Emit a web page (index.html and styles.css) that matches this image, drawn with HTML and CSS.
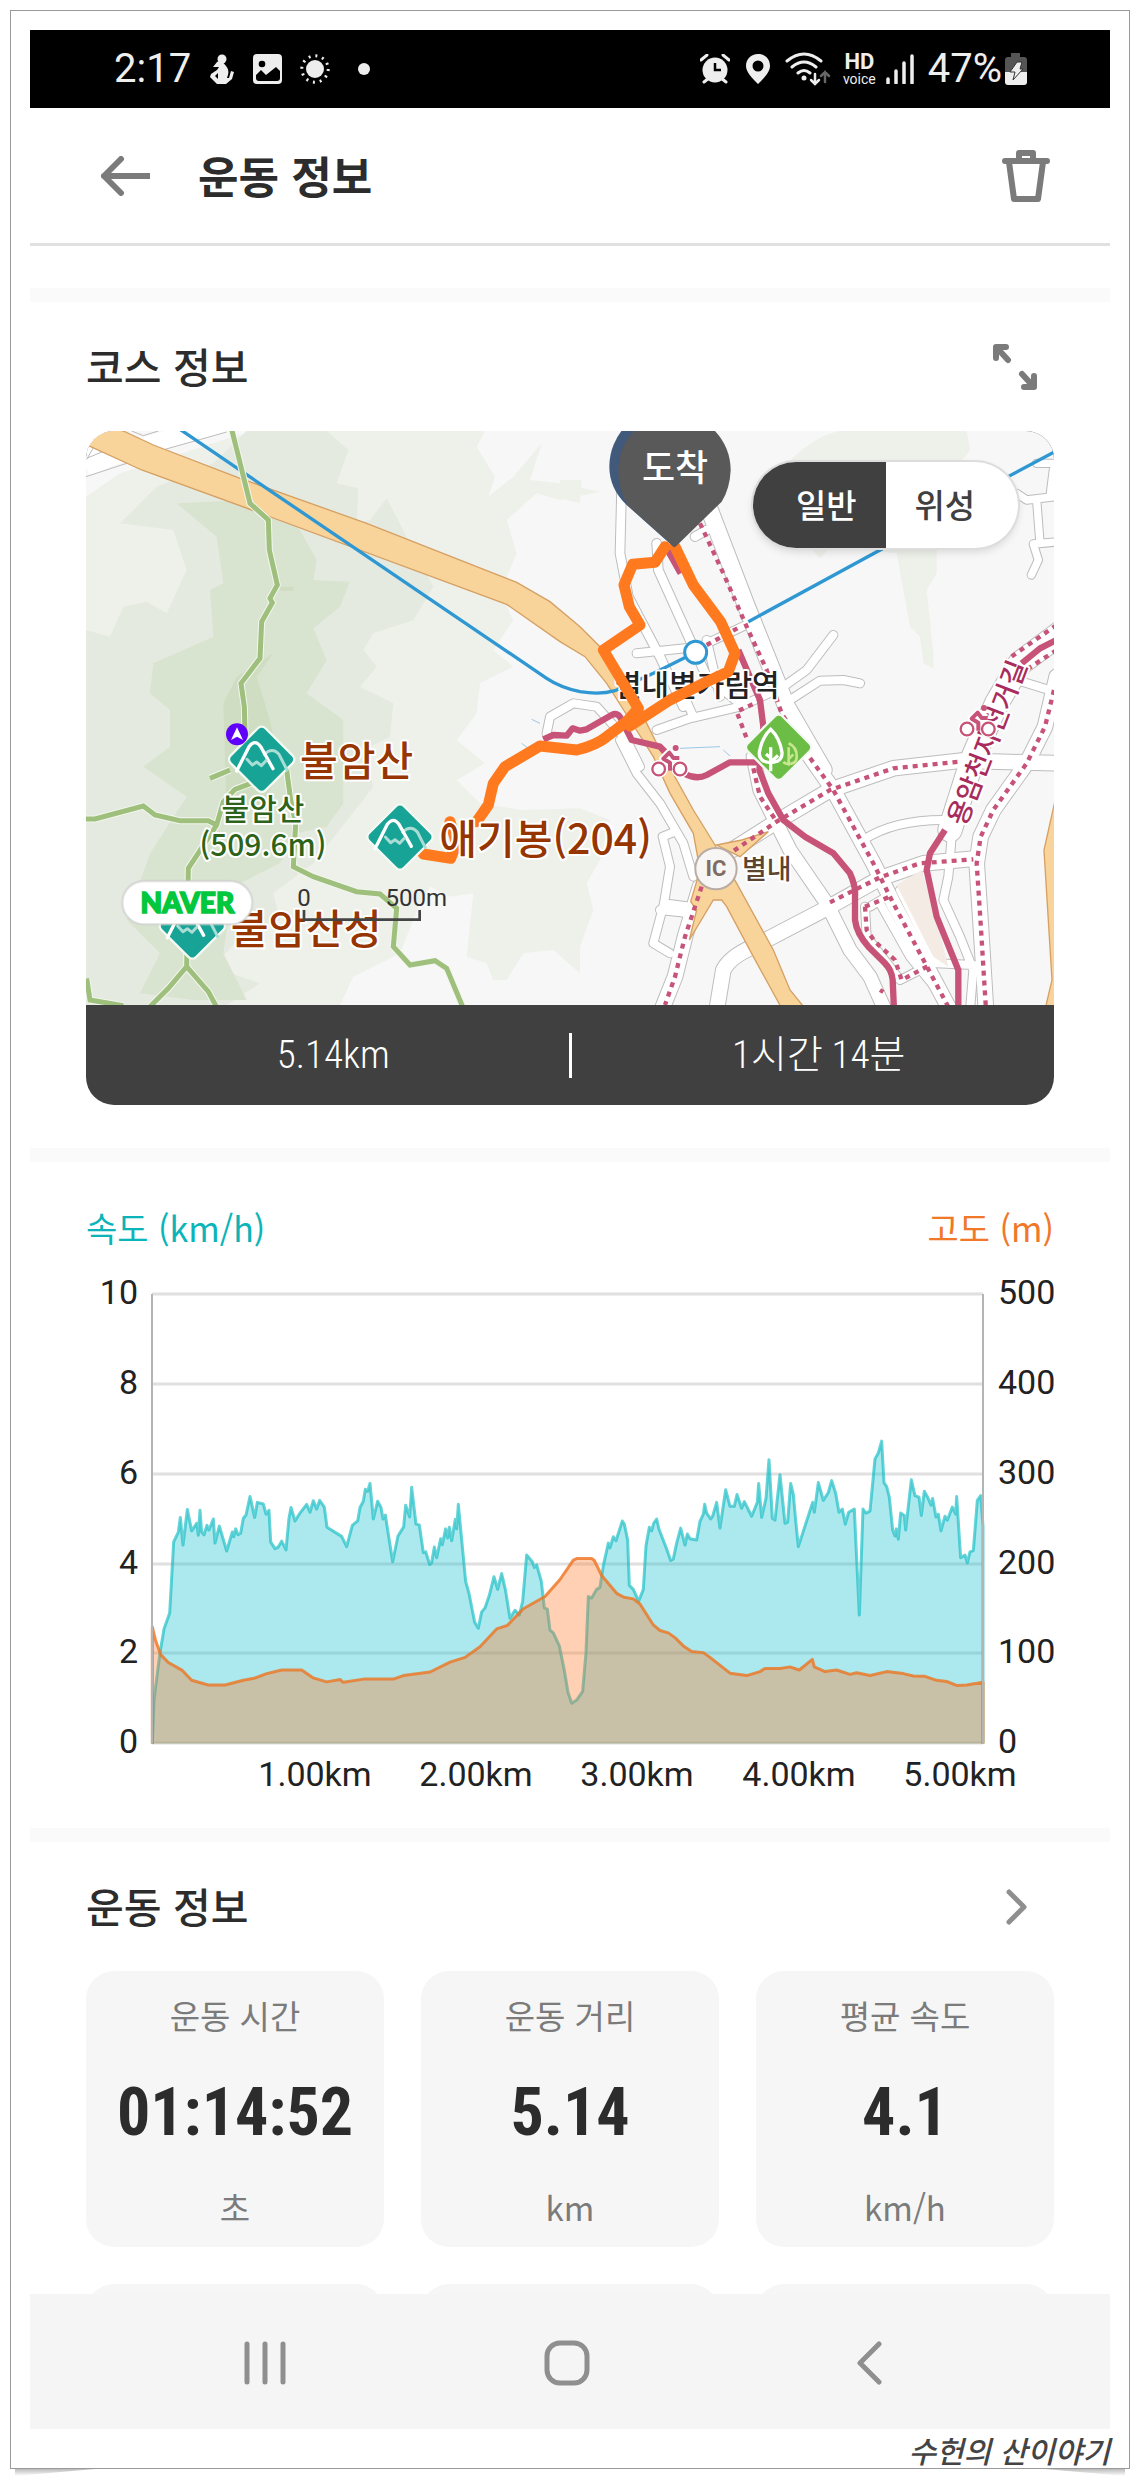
FILE: index.html
```html
<!DOCTYPE html>
<html lang="ko">
<head>
<meta charset="utf-8">
<meta name="viewport" content="width=device-width, initial-scale=1">
<title>운동 정보</title>
<link rel="stylesheet" href="styles.css">
</head>
<body>
<div class="frame">
<div class="screen">
  <div class="status">
    <span class="status-time">2:17</span>
    <svg class="ic-person" viewBox="0 0 26 30" width="26" height="30"><circle cx="14" cy="5" r="4.500"/><path d="M9 8l4-2 5 6c4 5 2 9 1 12h2l2-7 3 1-2 7-6 5H9L2 23l1-3 6-4 2-3-6 0z"/><path d="M7 22l3-3v6z" fill="#000"/></svg>
    <svg class="ic-photo" viewBox="0 0 29 30" width="29" height="30"><rect width="29" height="30" rx="4"/><circle cx="9" cy="10" r="3.300" fill="#000"/><path d="M3 21l5-5 5 5 10-8 4 4v7q0 3-3 3H6q-3 0-3-3z" fill="#000"/></svg>
    <svg class="ic-sun" viewBox="0 0 30 30" width="30" height="30"><circle cx="15" cy="15" r="9"/><circle cx="15" cy="15" r="13.200" fill="none" stroke="#eee" stroke-width="3" stroke-dasharray="2 4.910"/></svg>
    <svg class="ic-dot" viewBox="0 0 12 12" width="12" height="12"><circle cx="6" cy="6" r="6"/></svg>
    <span class="grow"></span>
    <svg class="ic-alarm" viewBox="0 0 30 30" width="30" height="30"><circle cx="15" cy="16" r="12.500"/><path d="M1 6l6-5M29 6l-6-5M4 28l5-4M26 28l-5-4" stroke="#eee" stroke-width="3" stroke-linecap="round"/><path d="M15 9v7h6" fill="none" stroke="#000" stroke-width="2.500"/></svg>
    <svg class="ic-pin" viewBox="0 0 24 30" width="24" height="30"><path fill-rule="evenodd" d="M12 0c7 0 12 5 12 12 0 6-6 12-12 18C6 24 0 18 0 12 0 5 5 0 12 0zm0 6.500a5.500 5.500 0 1 0 0 11 5.500 5.500 0 0 0 0-11z"/></svg>
    <svg class="ic-wifi" viewBox="0 0 46 34" width="46" height="34"><g fill="none" stroke="#eee" stroke-width="3" stroke-linecap="round"><path d="M2 9q17-14 34 0M7 15q12-10 24 0M13 21q6-5 12 0"/><path d="M30 22v9m-4-3l4 4 4-4" stroke-width="2.500"/><path d="M40 30v-10m-4 4l4-4 4 4" stroke="#666" stroke-width="2.500"/></g><circle cx="19" cy="26" r="2.500"/></svg>
    <span class="hd"><b>HD</b><small>voice</small></span>
    <svg class="ic-signal" viewBox="0 0 28 30" width="28" height="30"><path d="M2 25v4M10 17v12M18 9v20M26 2v27" stroke="#eee" stroke-width="3.500" stroke-linecap="round"/></svg>
    <span class="status-pct">47%</span>
    <svg class="ic-batt" viewBox="0 0 22 32" width="22" height="32"><path d="M6 0h9v4h4q3 0 3 3v13H0V7q0-3 3-3h3z" fill="#555"/><path d="M0 19h22v10q0 3-3 3H3q-3 0-3-3z"/><path d="M12 9h5l-2 7h3L8 27l2-8H5z" stroke="#333"/></svg>
  </div>

  <header class="appbar">
    <button class="icon-btn" aria-label="뒤로"><svg viewBox="0 0 50 40" width="50" height="40"><path d="M21 3L4 20l17 17M4 20h45" class="line6"/></svg></button>
    <h1>운동 정보</h1>
    <button class="icon-btn" aria-label="삭제"><svg viewBox="0 0 48 54" width="48" height="54"><path d="M3 12h42M17 11V4h14v7M7 13l5 37h24l5-37" class="line6"/></svg></button>
  </header>

  <section class="section course">
    <div class="section-head">
      <h2>코스 정보</h2>
      <button class="icon-btn expand" aria-label="지도 확대"><svg viewBox="0 0 46 46" width="46" height="46"><path d="M16 16L5 4M4 14V3h10M30 30l11 12M42 32v11h-10" class="line6"/></svg></button>
    </div>
    <div class="map-card">
      <svg class="map" viewBox="18 33 2904 1722" role="img" aria-label="코스 지도">
        <defs>
          <g id="roads-top">
            <path d="M445 260L560 560 680 860 790 1050" stroke-width="56"/>
            <path d="M185 200L180 400 205 530 300 710 370 860M290 370L295 450 440 770 540 850M405 350L440 330" stroke-width="32"/>
            <path d="M230 700L420 680 590 600M440 660L480 830M820 645L740 750 670 800 540 860 390 895 290 930M900 790L850 780 780 782 690 840M-40 940L-30 890 40 850 110 860 200 960 240 1040M360 800L400 890" stroke-width="30"/>
            <path d="M1500 130H1430M1370 220L1400 240 1500 228M1430 240L1440 370M1480 150L1470 230M1500 365L1420 372 1435 420 1414 465" stroke-width="28"/>
            <path d="M1500 640L1380 730 1310 850 1240 1010 1170 1230" stroke-width="76"/>
            <path d="M1370 780L1500 820" stroke-width="30"/>
          </g>
          <g id="roads-low">
            <path d="M500 490L650 395 810 300 1000 235 1200 212 1500 220M1490-40L1455 110 1400 220 1300 360 1262 440 1250 520 1262 700 1278 960M750 200L820 300 940 520 1000 640 1170 960M470 960L490 840Q510 800 580 770L800 655 960 565 1090 520 1250 505M420 590L375 740 345 860 305 960" stroke-width="50"/>
            <path d="M580 200L600 300 690 480 800 640 870 780 930 860 975 960" stroke-width="46"/>
            <path d="M180 150L230 250 300 340 370 460 400 560M345 425L308 440 330 530 312 640 280 760 330 790M312 640L390 650M300 660L390 670M910 450Q1000 390 1150 390M1175 440L1165 560 1150 630 1200 740 1240 840 1230 960M1020 600L1130 820 1240 825M930 650L980 620M915 650L920 740 1020 870 1120 820M960 640L1050 800 1180 960" stroke-width="30"/>
          </g>
          <g id="trails">
            <path d="M453 20L478 120 510 250 565 300 568 390 592 495 570 535 577 548 545 605 540 715 483 790 493 860 495 940M540 1080L465 1108 430 1145 410 1215 325 1345 320 1640 265 1705 205 1765M10 1197H45L190 1158 225 1185 300 1202H385L410 1215M620 1050L632 1140 647 1210 640 1340 700 1370 830 1415 900 1422 950 1465 940 1580 990 1635 1065 1622 1100 1645 1150 1765M390 1075L450 1050M320 1640L385 1715 412 1765M20 1675L30 1740 130 1757"/>
          </g>
          <g id="peak">
            <rect x="-74" y="-74" width="148" height="148" rx="16" transform="rotate(45)" fill="#17a395" stroke="#f4f8f2" stroke-width="7"/>
            <path d="M8-15Q32-38 52-15L76 32" class="peak-far"/><path d="M-75 35L-38-38Q-20-62-3-38L34 28" class="peak-near"/><path d="M-44 0l16 17 13-9 14 11 14-15" class="peak-far"/>
          </g>
          <g id="bike">
            <path d="M30-6H12L0-22-18-4 2 8v24" fill="none" stroke="#fff" stroke-width="24" stroke-linejoin="round"/>
            <g fill="#fff" stroke="#fff" stroke-width="16"><circle cx="-32" cy="27" r="19"/><circle cx="32" cy="27" r="19"/></g>
            <g fill="#fff" stroke="#c75478" stroke-width="7"><circle cx="-32" cy="27" r="19"/><circle cx="32" cy="27" r="19"/></g>
            <circle cx="19" cy="-36" r="9" fill="#c75478"/><path d="M30-6H12L0-22-18-4 2 8v24" fill="none" stroke="#c75478" stroke-width="12" stroke-linejoin="round"/>
          </g>
        </defs>
        <rect x="18" y="33" width="2904" height="1722" fill="#f7f7f7"/>
        <path fill="#eef1ea" d="M18 230L120 160 430 60 520 33H1215L1190 80 1245 170 1225 230 1300 170 1385 70 1350 180 1440 190 1560 215 1440 240 1370 220 1280 300 1310 400 1260 520 1300 600 1240 690 1300 740 1200 790 1190 880 1130 960 1215 1030 1130 1080 1200 1150 1330 1170 1500 1165 1590 1200 1560 1320 1520 1390 1540 1470 1500 1580 1500 1660 1420 1590 1330 1600 1280 1680 1240 1680 1220 1630 1160 1610 1180 1420 1110 1430 1050 1400 1020 1450 960 1600 820 1670 780 1755H18z"/>
        <path fill="#eef1ea" d="M2100 155Q2190 50 2280 33H2660L2670 90 2640 130 2570 150 2570 460 2540 510 2560 700 2560 745 2530 730 2520 650 2490 620 2450 400 2250 380 2220 415 2180 370zM1440 180L1505 180 1500 250 1440 235z"/>
        <path fill="#e4eadf" d="M500 33H740L805 90 770 190 835 205 830 310 870 300 920 235 980 350 1060 500 1000 600 880 640 850 690 890 740 840 800 940 850 930 950 850 990 880 1100 700 1330 580 1420 600 1500 500 1530 400 1640 540 1690 440 1755H18V630L90 650 130 560 200 545 260 580 320 450 280 330 120 310 230 200 400 130z"/>
        <path fill="#d9e4d0" d="M290 250L510 240 610 290 660 330 710 420 700 480 810 485 780 560 700 625 740 720 680 820 790 900 790 1150 740 1220 650 1240 600 1330 460 1400 430 1600 500 1740H340L180 1720 240 1600 140 1500 210 1300 320 1130 190 1040 270 980 270 870 210 820 220 730 400 650 390 510 430 490 410 350z"/>
        <path fill="#cfddc2" d="M470 770L580 700 530 770 570 900 600 1060 540 1160 440 1170 430 850zM600 500h40v12h-40z"/>

        <path d="M18 140L120 100 430 10M18 100L60 33" fill="none" stroke="#fff" stroke-width="56"/>
        <path d="M18 170L140 130M255 88L440 36M20 118L48 70M20 115L75 92M155 33L190 47 235 33" fill="none" stroke="#bbb" stroke-width="3"/>

        <g class="roads">
          <use href="#roads-top" x="1440" class="casing"/><use href="#roads-low" x="1440" y="810" class="casing"/>
        </g>
        <g class="road-fill">
          <g transform="translate(1440 0)">
            <path d="M445 260L560 560 680 860 790 1050" stroke-width="50"/>
            <path d="M185 200L180 400 205 530 300 710 370 860M290 370L295 450 440 770 540 850M405 350L440 330" stroke-width="26"/>
            <path d="M230 700L420 680 590 600M440 660L480 830M820 645L740 750 670 800 540 860 390 895 290 930M900 790L850 780 780 782 690 840M-40 940L-30 890 40 850 110 860 200 960 240 1040M360 800L400 890" stroke-width="24"/>
            <path d="M1500 130H1430M1370 220L1400 240 1500 228M1430 240L1440 370M1480 150L1470 230M1500 365L1420 372 1435 420 1414 465" stroke-width="22"/>
            <path d="M1500 640L1380 730 1310 850 1240 1010 1170 1230" stroke-width="70"/>
            <path d="M1370 780L1500 820" stroke-width="24"/>
          </g>
          <g transform="translate(1440 810)">
            <path d="M500 490L650 395 810 300 1000 235 1200 212 1500 220M1490-40L1455 110 1400 220 1300 360 1262 440 1250 520 1262 700 1278 960M750 200L820 300 940 520 1000 640 1170 960M470 960L490 840Q510 800 580 770L800 655 960 565 1090 520 1250 505M420 590L375 740 345 860 305 960" stroke-width="44"/>
            <path d="M580 200L600 300 690 480 800 640 870 780 930 860 975 960" stroke-width="40"/>
            <path d="M180 150L230 250 300 340 370 460 400 560M345 425L308 440 330 530 312 640 280 760 330 790M312 640L390 650M300 660L390 670M910 450Q1000 390 1150 390M1175 440L1165 560 1150 630 1200 740 1240 840 1230 960M1020 600L1130 820 1240 825M930 650L980 620M915 650L920 740 1020 870 1120 820M960 640L1050 800 1180 960" stroke-width="24"/>
          </g>
        </g>
        <path fill="#f5ebe5" d="M2450 1395L2525 1350 2570 1500 2605 1640 2560 1610z"/>

        <g fill="#f8d49b" stroke="#d6a064" stroke-width="4">
          <path d="M10 70L75 20 130 33 220 75 480 175 860 310 1310 487 1410 545 1500 620 1560 680 1620 770 1690 890 1740 990 1840 1170 1905 1275 1970 1390 2080 1590 2130 1710 2175 1765H2105L2020 1610 1940 1460 1925 1440 1900 1440 1828 1560 1850 1470 1832 1445 1860 1350 1840 1240 1770 1120 1720 1010 1650 900 1580 790 1515 710 1440 665 1280 553 515 270 185 150z"/>
          <path d="M1910 1275L1985 1260 2065 1235 1980 1310z"/>
          <path d="M2930 1120L2892 1290 2916 1680 2896 1765H2930z"/>
        </g>

        <path d="M300 28L560 205 1400 775Q1440 802 1500 815 1560 825 1605 812L1730 755 1847 697M2005 605L2410 385 2780 172 2930 92" fill="none" stroke="#2f98d3" stroke-width="10"/>
        <path d="M1800 985L1920 980M1930 990L1950 1008M1355 898L1380 910M1325 970L1345 985" fill="none" stroke="#9cc8e4" stroke-width="3"/>

        <use href="#trails" fill="none" stroke="#f2f6ee" stroke-width="21"/>
        <use href="#trails" fill="none" stroke="#9fbf7d" stroke-width="15"/>

        <g class="cycle">
          <g transform="translate(1440 0)">
            <path d="M-50 958L-20 945 20 947 38 925 60 932 80 928 155 885Q175 875 185 900L215 960 300 980 350 1030M320 385L362 460M535 690L565 760 600 840 610 920"/>
            <path d="M1500 655L1440 685 1385 730"/>
          </g>
          <g transform="translate(1440 810)"><path d="M375 252Q410 270 440 255L510 217H600M610 110L598 240 625 310 670 390 735 440 820 490 870 550Q888 590 885 620V690Q890 730 925 770L975 820Q995 840 998 870L1002 960M1155 420L1110 490 1100 540 1130 680 1195 840V960"/></g>
        </g>
        <g class="cycle-dash">
          <g transform="translate(1440 0)"><path d="M420 310L490 460 560 620 620 750 665 880 740 1000 820 1110 940 1330 1000 1450 1170 1770M440 675L545 618M605 840L530 875 560 955M1490 615L1340 720M1490 690L1390 755"/></g>
          <g transform="translate(1440 810)"><path d="M580 235L600 320 650 395M522 482L650 395 810 300 1000 235 1200 215M1482 0L1455 110 1400 220 1300 360 1262 440 1250 520 1262 700 1278 960M810 637L960 562 1080 520 1240 508M425 590L375 740 345 860 315 945M915 650L990 620M915 650L920 720 945 755 1005 810 1025 870 1110 825M960 900l10 6"/></g>
        </g>

        <text class="t-bike" transform="translate(2655 1222) rotate(-69)">용암천자전거길</text>
        <use href="#bike" x="1768" y="1020"/><use href="#bike" x="2693" y="900"/>

        <circle cx="1847" cy="697" r="33" fill="#fff" stroke="#2f98d3" stroke-width="9"/>
        <text class="t-station" x="1602" y="828">별내별가람역</text>

        <g transform="translate(2096 982)">
          <rect x="-74" y="-74" width="148" height="148" rx="16" transform="rotate(45)" fill="#6cbd45" stroke="#f4f8f2" stroke-width="7"/>
          <path d="M30 55V0M30 35l14-14M30-12Q56 0 54 32 52 50 30 50 20 50 14 44" fill="none" stroke="#c9e68f" stroke-width="8"/>
          <path d="M-24 72V0M-24 45L-2 24M-24 32l-14-12M-24-54Q-50-30-58 15-60 44-24 46 12 44 10 15 2-30-24-54z" fill="none" stroke="#fff" stroke-width="10"/>
        </g>

        <path d="M1110 1205L1130 1270 1112 1315 1030 1302M1190 1205L1225 1155 1240 1090 1275 1040 1380 978 1490 990Q1550 975 1580 950L1640 905 1675 865 1570 690 1680 615 1648 560 1632 495 1658 433 1725 427 1755 380M1785 380L1840 495 1922 605 1965 700 1945 755 1870 790 1770 840 1650 918" class="route"/>

        <path d="M1588 140A176 176 0 0 1 1940 140Q1935 200 1782 382L1640 255Q1588 205 1588 140z" fill="#41597a"/>
        <path d="M1615 150A168 168 0 0 1 1952 150Q1950 205 1925 245L1785 382 1645 258Q1615 215 1615 150z" fill="#595959"/>
        <text class="t-pin" x="1785" y="183">도착</text>

        <circle cx="1908" cy="1346" r="62" fill="#f8f6f4" stroke="#b9aca4" stroke-width="6"/>
        <text class="t-ic" x="1908" y="1368">IC</text>
        <text class="t-byeol" x="1986" y="1377">별내</text>

        <use href="#peak" x="545" y="1018"/><use href="#peak" x="960" y="1251"/><use href="#peak" x="337" y="1518"/>
        <circle cx="471" cy="943" r="33" fill="#5f00fa"/><path d="M471 922l18 38-18-10-18 10z" fill="#fff"/>
        <text class="t-peak" x="660" y="1068">불암산</text>
        <text class="t-peak" x="1078" y="1301">애기봉(204)</text>
        <text class="t-peak" x="452" y="1571">불암산성</text>
        <text class="t-hill" x="549" y="1200">불암산</text>
        <text class="t-hill" x="549" y="1308">(509.6m)</text>
        <rect x="127" y="1383" width="390" height="130" rx="65" fill="#fff" stroke="#ccc" stroke-opacity=".6" stroke-width="7"/>
        <text class="t-naver" x="322" y="1478">NAVER</text>
        <path d="M672 1470v29h347v-29" fill="none" stroke="#444" stroke-width="8"/>
        <text class="t-scale" x="672" y="1457">0</text><text class="t-scale" x="1009" y="1457">500m</text>
      </svg>
      <div class="map-toggle"><button class="on" aria-pressed="true">일반</button><button aria-pressed="false">위성</button></div>
      <div class="map-summary"><span>5.14km</span><i></i><span>1시간 14분</span></div>
    </div>
  </section>

  <section class="section graph">
    <div class="legend"><span class="speed">속도 (km/h)</span><span class="alt">고도 (m)</span></div>
    <svg class="chart" viewBox="0 0 968 530" role="img" aria-label="속도와 고도 그래프">
      <path d="M66 24H897M66 114H897M66 204H897M66 294H897M66 383H897M66 473H897" stroke="#e0e0e0" stroke-width="3"/>
      <g transform="translate(-6 -80) scale(.33333 .39541)">
        <path class="speed-area" d="M217 1400L222 1290 240 1170 252 1110 269 1070 281 890 295 865 301 828 309 898 322 808 335 862 350 843 355 873 360 810 365 865 372 872 381 848 387 860 400 832 405 893 418 850 440 913 457 865 461 877 467 857 474 872 482 868 490 830 498 822 510 775 524 828 532 790 550 794 558 820 567 810 572 890 585 907 595 903 605 888 618 910 627 830 633 803 645 837 660 817 680 795 690 815 700 786 710 807 719 785 733 802 741 853 785 876 800 902 817 848 833 837 840 803 850 787 856 757 863 762 870 742 880 832 893 787 903 803 909 832 916 822 938 940 954 875 971 852 977 797 989 827 995 752 1008 845 1018 847 1030 917 1037 915 1049 947 1055 943 1063 903 1070 930 1082 882 1087 897 1097 857 1103 880 1108 853 1115 887 1126 833 1130 857 1135 795 1157 990 1167 1020 1184 1093 1195 1108 1205 1067 1215 1057 1228 1025 1242 978 1253 1010 1265 970 1276 1010 1290 1083 1305 1063 1318 1075 1328 1040 1340 923 1357 940 1363 955 1370 948 1384 990 1393 1057 1402 1060 1410 1113 1420 1120 1438 1153 1453 1215 1464 1270 1475 1298 1490 1290 1508 1268 1518 1170 1525 1028 1535 1032 1550 1010 1560 1005 1570 950 1585 893 1590 905 1600 877 1608 887 1627 837 1633 845 1643 885 1648 1000 1660 1010 1676 1040 1690 1010 1698 900 1708 853 1715 862 1721 843 1730 832 1737 858 1760 908 1772 937 1780 933 1790 893 1802 855 1815 898 1822 870 1830 882 1850 885 1860 838 1870 820 1874 795 1880 817 1892 832 1898 825 1910 790 1920 855 1937 758 1950 800 1963 800 1971 770 1985 805 1993 788 2015 825 2032 790 2036 742 2045 828 2058 780 2067 682 2077 830 2085 835 2100 720 2115 843 2123 840 2132 742 2140 770 2147 835 2155 902 2198 790 2203 815 2215 740 2230 785 2245 765 2255 735 2267 767 2277 815 2287 807 2296 845 2306 815 2323 807 2338 1075 2349 807 2358 817 2370 812 2385 680 2395 665 2405 635 2412 740 2420 750 2428 777 2438 860 2445 875 2449 857 2455 883 2462 817 2473 823 2477 860 2494 733 2505 773 2517 777 2524 823 2533 762 2543 777 2553 797 2558 780 2568 827 2575 820 2583 862 2595 825 2602 835 2617 802 2627 820 2630 775 2642 930 2655 923 2662 943 2670 915 2680 912 2692 785 2702 773 2709 850V1400"/>
        <path class="alt-area" d="M217 1400V1105L227 1140 242 1175 265 1195 307 1215 335 1240 385 1252 435 1252 490 1240 522 1235 560 1223 605 1214 665 1214 700 1234 740 1244 780 1238 790 1245 850 1237 940 1237 970 1228 1050 1219 1110 1194 1155 1182 1200 1155 1250 1110 1282 1101 1330 1059 1395 1028 1440 985 1480 936 1490 932 1535 932 1543 937 1565 975 1610 1020 1632 1030 1660 1034 1680 1047 1720 1100 1740 1114 1765 1120 1785 1132 1810 1153 1835 1167 1870 1170 1890 1182 1950 1222 2000 1228 2040 1218 2055 1210 2100 1210 2130 1206 2158 1214 2197 1187 2203 1206 2235 1218 2270 1214 2310 1225 2330 1221 2370 1228 2420 1218 2470 1223 2500 1229 2535 1230 2570 1240 2600 1243 2630 1253 2660 1252 2709 1245V1400"/>
      </g>
      <path d="M66 24V473M897 24V473" stroke="#b4b4b4" stroke-width="2"/>
      <g class="tick left"><text x="52" y="34">10</text><text x="52" y="124">8</text><text x="52" y="214">6</text><text x="52" y="304">4</text><text x="52" y="393">2</text><text x="52" y="483">0</text></g>
      <g class="tick"><text x="912" y="34">500</text><text x="912" y="124">400</text><text x="912" y="214">300</text><text x="912" y="304">200</text><text x="912" y="393">100</text><text x="912" y="483">0</text></g>
      <g class="tick mid"><text x="229" y="516">1.00km</text><text x="390" y="516">2.00km</text><text x="551" y="516">3.00km</text><text x="713" y="516">4.00km</text><text x="874" y="516">5.00km</text></g>
    </svg>
  </section>

  <section class="section stats">
    <div class="section-head">
      <h2>운동 정보</h2>
      <button class="icon-btn more" aria-label="더보기"><svg viewBox="0 0 22 36" width="22" height="36"><path d="M3 3l15 15L3 33" class="line5 light"/></svg></button>
    </div>
    <div class="cards">
      <div class="card"><span class="name">운동 시간</span><strong>01:14:52</strong><span class="unit">초</span></div>
      <div class="card"><span class="name">운동 거리</span><strong>5.14</strong><span class="unit">km</span></div>
      <div class="card"><span class="name">평균 속도</span><strong>4.1</strong><span class="unit">km/h</span></div>
    </div>
    <div class="cards peek"><div class="card"></div><div class="card"></div><div class="card"></div></div>
  </section>

  <nav class="sysnav">
    <button aria-label="최근 앱"><svg viewBox="0 0 42 44" width="42" height="44"><path d="M3 3v38M21 3v38M39 3v38" class="line5 light"/></svg></button>
    <button aria-label="홈"><svg viewBox="0 0 46 46" width="46" height="46"><rect x="3" y="3" width="40" height="40" rx="13" class="line5 light"/></svg></button>
    <button aria-label="뒤로"><svg viewBox="0 0 26 44" width="26" height="44"><path d="M23 3L4 22l19 19" class="line5 light"/></svg></button>
  </nav>
</div>
<p class="signature">수헌의 산이야기</p>
</div>
</body>
</html>
```
FILE: styles.css
```css
* { box-sizing: border-box; }
body { margin: 0; background: #fff; color: #2c2c2c; font-family: "Noto Sans CJK KR", "Noto Sans", sans-serif; }
h1, h2, p { margin: 0; }
button { border: 0; padding: 0; background: none; font: inherit; color: inherit; display: flex; align-items: center; justify-content: center; }
svg { display: block; flex: none; }

.frame { margin: 10px; padding: 19px 19px 0; border: 1px solid #999; position: relative; }
.frame::before, .frame::after { content: ""; position: absolute; top: 100%; width: 80px; height: 7px; margin-top: 1px; background: linear-gradient(#bbb, #fff); }
.frame::before { left: 4px; clip-path: polygon(0 0, 100% 0, 0 100%); }
.frame::after { right: 4px; clip-path: polygon(0 0, 100% 0, 100% 100%); }

.status { display: flex; align-items: center; height: 78px; padding: 0 83px 0 84px; background: #000; color: #eee; fill: #eee; font: 40px/78px Roboto, sans-serif; }
.grow { flex: 1; }
.ic-person { margin-left: 17px; }
.ic-photo { margin-left: 19px; }
.ic-sun { margin-left: 18px; }
.ic-dot { margin-left: 28px; }
.ic-pin { margin-left: 16px; }
.ic-wifi { margin-left: 15px; }
.hd { display: flex; flex-direction: column; align-items: center; margin-left: 12px; }
.hd b { font-size: 22px; line-height: 20px; }
.hd small { font-size: 14px; line-height: 14px; }
.ic-signal { margin-left: 10px; }
.status-pct { margin-left: 14px; }
.ic-batt { margin-left: 3px; }

.line5, .line6 { fill: none; stroke: #7b7b7b; stroke-width: 5; stroke-linecap: round; stroke-linejoin: round; }
.line6 { stroke-width: 6; }
.light { stroke: #8f8f8f; }

.appbar { display: flex; align-items: center; height: 138px; padding: 0 60px 0 70px; border-bottom: 3px solid #e0e0e0; margin-bottom: 42px; }
.appbar h1 { flex: 1; margin-left: 48px; font-size: 44px; line-height: 60px; font-weight: 700; padding-bottom: 2px; }

.section { padding: 0 56px; border-top: 14px solid #fafafa; }
.section-head { display: flex; align-items: center; justify-content: space-between; height: 129px; }
.section-head h2 { font-size: 41px; line-height: 56px; font-weight: 500; padding-bottom: 4px; }
.expand { margin-right: 16px; }
.more { margin-right: 26px; }
.course { padding-bottom: 43px; }

.map-card { position: relative; border-radius: 28px; overflow: hidden; background: #404040; }
.map { width: 100%; height: auto; font-family: "Noto Sans CJK KR", sans-serif; }
.map-toggle { position: absolute; top: 31px; right: 36px; display: flex; width: 265px; height: 86px; border-radius: 43px; overflow: hidden; background: #fff; box-shadow: 0 0 0 2px #ddd, 0 4px 8px #0002; }
.map-toggle button { flex: 1; font-size: 33px; font-weight: 500; color: #404040; padding: 0 14px 2px 0; }
.map-toggle .on { background: #404040; color: #fff; padding: 0 0 2px 14px; }
.map-summary { display: flex; align-items: center; height: 100px; color: #fff; font-family: "Roboto Condensed", "Noto Sans CJK KR", sans-serif; font-size: 39px; line-height: 46px; font-weight: 300; text-align: center; }
.map-summary span { flex: 1; padding-left: 12px; }
.map-summary i { width: 3px; height: 45px; background: #fff; }

.casing { fill: none; stroke: #bdbdbd; stroke-linejoin: round; stroke-linecap: round; }
.road-fill { fill: none; stroke: #fff; stroke-linejoin: round; stroke-linecap: round; }
.cycle, .cycle-dash { fill: none; stroke: #c75478; stroke-width: 19; stroke-linejoin: round; }
.cycle-dash { stroke-width: 13; stroke-dasharray: 15 15; }
.route { fill: none; stroke: #ff7a1f; stroke-width: 33; stroke-linejoin: round; stroke-linecap: round; }
.peak-near, .peak-far { fill: none; stroke: #fff; stroke-width: 10; stroke-linecap: round; stroke-linejoin: round; }
.peak-far { stroke: #a9ddd5; stroke-width: 9; }
.t-peak, .t-hill, .t-station, .t-bike, .t-byeol { paint-order: stroke; stroke: #fff; stroke-width: 12; stroke-linejoin: round; font-weight: 500; }
.t-peak { font-size: 123px; fill: #963500; }
.t-hill { font-size: 90px; fill: #2c6318; text-anchor: middle; }
.t-station { font-size: 90px; fill: #222; }
.t-bike { font-size: 81px; fill: #a82c5c; }
.t-byeol { font-size: 81px; fill: #5d4431; }
.t-ic { font: 700 66px Roboto, sans-serif; fill: #806c62; text-anchor: middle; }
.t-pin { font-size: 108px; font-weight: 500; fill: #fff; text-anchor: middle; }
.t-naver { font: 900 84px Lato, sans-serif; fill: #03c73c; stroke: #03c73c; stroke-width: 5; text-anchor: middle; }
.t-scale { font: 72px Roboto, sans-serif; fill: #333; text-anchor: middle; }

.legend { display: flex; justify-content: space-between; padding: 26px 0 2px; font-size: 34px; line-height: 80px; }
.speed { color: #0ab4b9; }
.alt { color: #f07828; }
.graph { padding-bottom: 28px; }
.chart { width: 100%; height: auto; }
.speed-area, .alt-area { stroke-linejoin: round; vector-effect: non-scaling-stroke; stroke-width: 3; }
.speed-area { fill: #0fc0ce; fill-opacity: .35; stroke: #12bcc2; stroke-opacity: .65; }
.alt-area { fill: #ff7926; fill-opacity: .35; stroke: #ee7420; stroke-opacity: .8; }
.tick { font: 34px Roboto, sans-serif; fill: #222; }
.left { text-anchor: end; }
.mid { text-anchor: middle; }

.cards { display: grid; grid-template-columns: repeat(3, 1fr); gap: 37px; }
.card { display: flex; flex-direction: column; align-items: center; height: 276px; padding-top: 19px; border-radius: 28px; background: #f6f6f6; color: #7b7b7b; }
.name { font-size: 33px; line-height: 50px; }
.card strong { margin-top: 26px; color: #2c2c2c; font-family: "Roboto Condensed", Roboto, sans-serif; font-weight: 700; font-size: 66px; line-height: 94px; }
.unit { margin-top: 22px; font-size: 33px; line-height: 50px; }
.peek { height: 10px; margin-top: 37px; overflow: hidden; }

.sysnav { display: flex; height: 135px; padding: 2px 90px 0 84px; background: #f5f5f5; }
.sysnav button { flex: 1; }
.signature { height: 39px; padding-top: 4px; font-size: 30px; line-height: 35px; font-style: italic; font-weight: 500; text-align: right; color: #444; }
```
